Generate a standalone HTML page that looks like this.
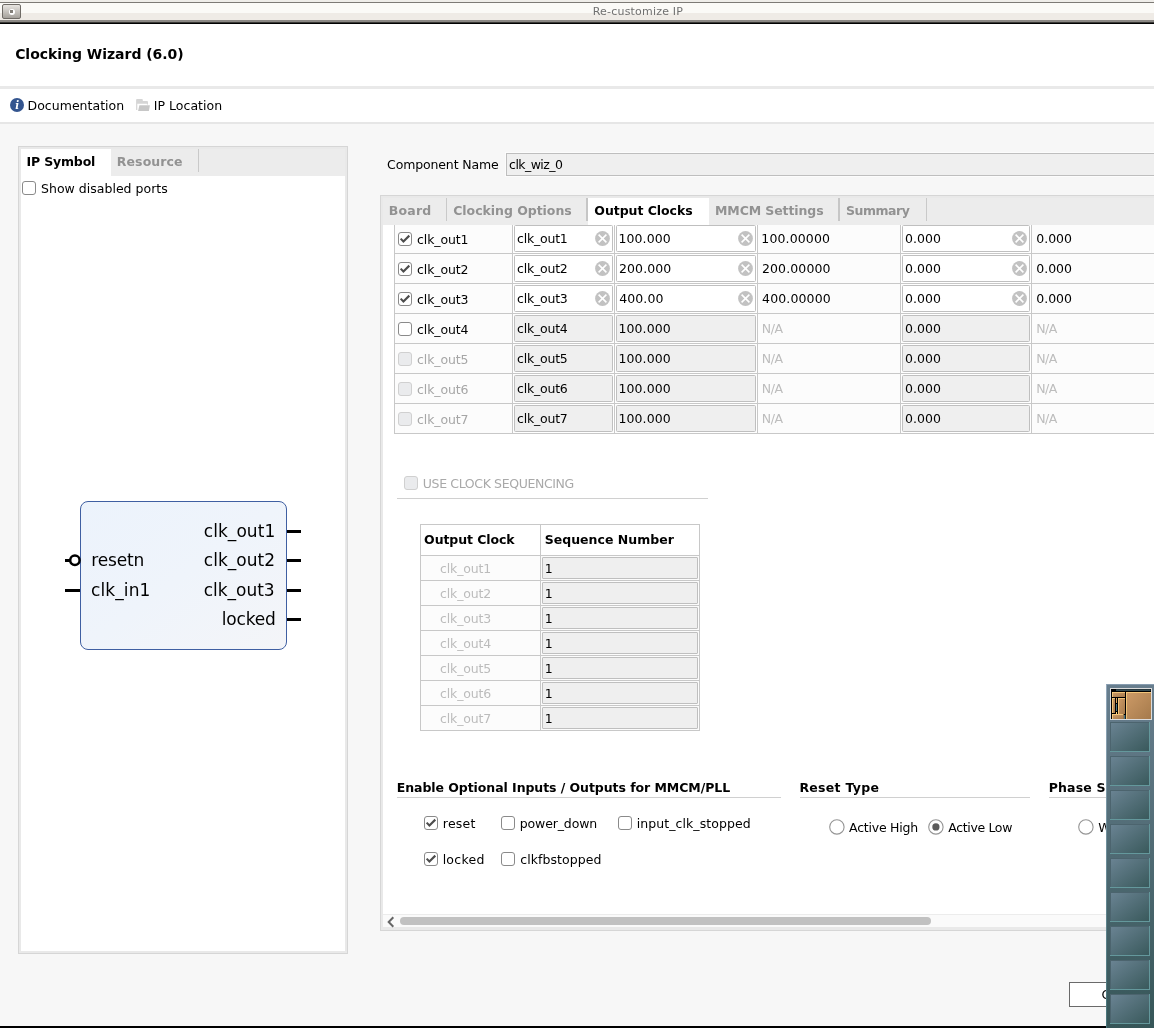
<!DOCTYPE html>
<html><head><meta charset="utf-8"><title>Re-customize IP</title>
<style>
*{box-sizing:border-box;margin:0;padding:0}
html,body{width:1154px;height:1028px;overflow:hidden;background:#f7f7f7}
body{position:relative;font-family:"DejaVu Sans","Liberation Sans",sans-serif;font-size:12.5px;color:#000;line-height:16px}
.a{position:absolute}
.t{position:absolute;white-space:pre;line-height:16px;height:16px}

.cb{position:absolute;width:14px;height:14px;border:1px solid #8a8a8a;border-radius:3px;background:#fff}
.cb.d{border-color:#d0d0d0;background:#eaebed}
.cb svg{position:absolute;left:-1px;top:-1px}
.inp{position:absolute;border:1px solid #bfbfbf;border-radius:1.5px;background:#fff}
.inp.d{background:#efefef}

</style></head><body>
<div class="a" style="left:0px;top:0px;width:1154px;height:24px;background:#000;"></div>
<div class="a" style="left:0px;top:0px;width:1154px;height:2px;background:#efede9;"></div>
<div class="a" style="left:0px;top:2px;width:1154px;height:1px;background:#7d7a75;"></div>
<div class="a" style="left:0px;top:3px;width:1154px;height:17px;background:linear-gradient(#fbfaf7 0,#fbfaf7 59%,#efebe6 59%,#efebe6 100%);"></div>
<div class="a" style="left:0px;top:20px;width:1154px;height:2px;background:#8b8884;"></div>
<div class="a" style="left:0px;top:22px;width:1154px;height:1px;background:#3a3936;"></div>
<div class="a" style="left:2px;top:4px;width:19px;height:15px;background:linear-gradient(#e8e5e1,#a5a19b);border:1px solid #6f6b66;border-radius:2px"></div>
<div class="a" style="left:8.5px;top:8.7px;width:6.2px;height:6.2px;background:#fff;border-radius:50%"></div>
<div class="a" style="left:10.3px;top:9.8px;width:2.6px;height:3.1px;background:#827e78;"></div>
<div class="a" style="left:0px;top:24px;width:1154px;height:62px;background:#fff;"></div>
<div class="a" style="left:0px;top:86px;width:1154px;height:3px;background:#e9e9e9;"></div>
<div class="a" style="left:0px;top:89px;width:1154px;height:33px;background:#fff;"></div>
<div class="a" style="left:0px;top:122px;width:1154px;height:2px;background:#e6e6e6;"></div>
<svg class="a" style="left:10px;top:98px;will-change:transform" width="14" height="14" viewBox="0 0 14 14"><circle cx="7" cy="7" r="7" fill="#34558f"/><text x="7.3" y="11" font-family="DejaVu Serif" font-style="italic" font-weight="bold" font-size="10.3" fill="#fff" text-anchor="middle">i</text></svg>
<svg class="a" style="left:136px;top:98px" width="15" height="14" viewBox="0 0 15 14"><path d="M0.1 2 Q0.1 1.1 1 1.1 L6 1.1 Q6.8 1.1 6.8 2 L6.8 3.1 L11 3.1 Q12 3.1 12 4 L12 6.6 L10.9 6.6 L10.9 5.8 L1.3 5.8 L1.3 11.9 L0.1 11.9 Z" fill="#d5d5d5"/><path d="M3.4 7.2 L13.9 7.2 L12.9 12.9 L2.1 12.9 Z" fill="#c7c7c7"/></svg>
<div class="a" style="left:18px;top:146px;width:330px;height:808px;background:#d6d6d6;"></div>
<div class="a" style="left:19px;top:147px;width:328px;height:806px;background:#e9e9e9;"></div>
<div class="a" style="left:21px;top:149px;width:324px;height:802px;background:#fff;"></div>
<div class="a" style="left:21px;top:149px;width:324px;height:27px;background:#ececec;"></div>
<div class="a" style="left:21px;top:149px;width:90px;height:27px;background:#fff;"></div>
<div class="a" style="left:198px;top:149px;width:1px;height:23px;background:#c9c9c9;"></div>
<div class="cb" style="left:22px;top:181px"></div>
<svg class="a" style="left:60px;top:495px" width="250" height="165" viewBox="60 495 250 165"><defs><linearGradient id="sg" x1="0" y1="0" x2="1" y2="1"><stop offset="0" stop-color="#ecf3fc"/><stop offset="0.5" stop-color="#eff4fb"/><stop offset="1" stop-color="#f4f5f8"/></linearGradient></defs><rect x="80.5" y="501.5" width="206" height="148" rx="7.5" ry="7.5" fill="url(#sg)" stroke="#3f5fa2" stroke-width="1"/><line x1="287" y1="531.5" x2="301" y2="531.5" stroke="#000" stroke-width="3"/><line x1="287" y1="560.5" x2="301" y2="560.5" stroke="#000" stroke-width="3"/><line x1="287" y1="590.5" x2="301" y2="590.5" stroke="#000" stroke-width="3"/><line x1="287" y1="619.5" x2="301" y2="619.5" stroke="#000" stroke-width="3"/><line x1="65" y1="590.5" x2="80" y2="590.5" stroke="#000" stroke-width="3"/><line x1="65" y1="560.5" x2="70" y2="560.5" stroke="#000" stroke-width="3"/><circle cx="74.9" cy="560.2" r="4.7" fill="#fff" stroke="#000" stroke-width="2.5"/></svg>
<div class="inp d" style="left:506px;top:153px;width:660px;height:23px;border-radius:0;border-color:#bebebe;box-shadow:0 0 0 1px #fcfcfc"></div>
<div class="a" style="left:380px;top:195px;width:790px;height:736px;background:#d6d6d6;"></div>
<div class="a" style="left:381px;top:196px;width:790px;height:734px;background:#e9e9e9;"></div>
<div class="a" style="left:383px;top:198px;width:790px;height:729px;background:#fff;"></div>
<div class="a" style="left:383px;top:198px;width:790px;height:27px;background:#ececec;"></div>
<div class="a" style="left:588px;top:198px;width:121px;height:27px;background:#fff;"></div>
<div class="a" style="left:586px;top:198px;width:2px;height:23px;background:#c6c6c6;"></div>
<div class="a" style="left:446px;top:198px;width:1px;height:23px;background:#c9c9c9;"></div>
<div class="a" style="left:838px;top:198px;width:2px;height:23px;background:#c6c6c6;"></div>
<div class="a" style="left:926px;top:198px;width:1px;height:23px;background:#c9c9c9;"></div>
<div class="a" style="left:394px;top:225px;width:770px;height:209px;background:#fcfcfc;"></div>
<div class="a" style="left:513px;top:225px;width:101px;height:209px;background:#fff;"></div>
<div class="a" style="left:615px;top:225px;width:142px;height:209px;background:#fff;"></div>
<div class="a" style="left:901px;top:225px;width:130px;height:209px;background:#fff;"></div>
<div class="a" style="left:394px;top:225px;width:1px;height:209px;background:#c8c8c8;"></div>
<div class="a" style="left:394px;top:253px;width:770px;height:1px;background:#c8c8c8;"></div>
<div class="a" style="left:394px;top:283px;width:770px;height:1px;background:#c8c8c8;"></div>
<div class="a" style="left:394px;top:313px;width:770px;height:1px;background:#c8c8c8;"></div>
<div class="a" style="left:394px;top:343px;width:770px;height:1px;background:#c8c8c8;"></div>
<div class="a" style="left:394px;top:373px;width:770px;height:1px;background:#c8c8c8;"></div>
<div class="a" style="left:394px;top:403px;width:770px;height:1px;background:#c8c8c8;"></div>
<div class="a" style="left:394px;top:433px;width:770px;height:1px;background:#c8c8c8;"></div>
<div class="a" style="left:512px;top:225px;width:1px;height:209px;background:#c8c8c8;"></div>
<div class="a" style="left:614px;top:225px;width:1px;height:209px;background:#c8c8c8;"></div>
<div class="a" style="left:757px;top:225px;width:1px;height:209px;background:#c8c8c8;"></div>
<div class="a" style="left:900px;top:225px;width:1px;height:209px;background:#c8c8c8;"></div>
<div class="a" style="left:1031px;top:225px;width:1px;height:209px;background:#c8c8c8;"></div>
<div class="cb" style="left:398px;top:232px"><svg width="14" height="14" viewBox="0 0 14 14"><path d="M1.9 7.35 L3.4 5.95 L5.4 8 L10.6 2.85 L12.05 4.5 L5.4 11 Z" fill="#4d4d4d"/></svg></div>
<div class="inp" style="left:514px;top:225px;width:99px;height:27px"></div>
<div class="inp" style="left:616px;top:225px;width:140px;height:27px"></div>
<div class="inp" style="left:902px;top:225px;width:128px;height:27px"></div>
<svg class="a" style="left:595px;top:231px" width="15" height="15" viewBox="0 0 15 15"><circle cx="7.5" cy="7.5" r="7.4" fill="#c2c2c2"/><path d="M3.6 3.6 L11.4 11.4 M11.4 3.6 L3.6 11.4" stroke="#fff" stroke-width="1.6" fill="none"/></svg>
<svg class="a" style="left:738px;top:231px" width="15" height="15" viewBox="0 0 15 15"><circle cx="7.5" cy="7.5" r="7.4" fill="#c2c2c2"/><path d="M3.6 3.6 L11.4 11.4 M11.4 3.6 L3.6 11.4" stroke="#fff" stroke-width="1.6" fill="none"/></svg>
<svg class="a" style="left:1012px;top:231px" width="15" height="15" viewBox="0 0 15 15"><circle cx="7.5" cy="7.5" r="7.4" fill="#c2c2c2"/><path d="M3.6 3.6 L11.4 11.4 M11.4 3.6 L3.6 11.4" stroke="#fff" stroke-width="1.6" fill="none"/></svg>
<div class="cb" style="left:398px;top:262px"><svg width="14" height="14" viewBox="0 0 14 14"><path d="M1.9 7.35 L3.4 5.95 L5.4 8 L10.6 2.85 L12.05 4.5 L5.4 11 Z" fill="#4d4d4d"/></svg></div>
<div class="inp" style="left:514px;top:255px;width:99px;height:27px"></div>
<div class="inp" style="left:616px;top:255px;width:140px;height:27px"></div>
<div class="inp" style="left:902px;top:255px;width:128px;height:27px"></div>
<svg class="a" style="left:595px;top:261px" width="15" height="15" viewBox="0 0 15 15"><circle cx="7.5" cy="7.5" r="7.4" fill="#c2c2c2"/><path d="M3.6 3.6 L11.4 11.4 M11.4 3.6 L3.6 11.4" stroke="#fff" stroke-width="1.6" fill="none"/></svg>
<svg class="a" style="left:738px;top:261px" width="15" height="15" viewBox="0 0 15 15"><circle cx="7.5" cy="7.5" r="7.4" fill="#c2c2c2"/><path d="M3.6 3.6 L11.4 11.4 M11.4 3.6 L3.6 11.4" stroke="#fff" stroke-width="1.6" fill="none"/></svg>
<svg class="a" style="left:1012px;top:261px" width="15" height="15" viewBox="0 0 15 15"><circle cx="7.5" cy="7.5" r="7.4" fill="#c2c2c2"/><path d="M3.6 3.6 L11.4 11.4 M11.4 3.6 L3.6 11.4" stroke="#fff" stroke-width="1.6" fill="none"/></svg>
<div class="cb" style="left:398px;top:292px"><svg width="14" height="14" viewBox="0 0 14 14"><path d="M1.9 7.35 L3.4 5.95 L5.4 8 L10.6 2.85 L12.05 4.5 L5.4 11 Z" fill="#4d4d4d"/></svg></div>
<div class="inp" style="left:514px;top:285px;width:99px;height:27px"></div>
<div class="inp" style="left:616px;top:285px;width:140px;height:27px"></div>
<div class="inp" style="left:902px;top:285px;width:128px;height:27px"></div>
<svg class="a" style="left:595px;top:291px" width="15" height="15" viewBox="0 0 15 15"><circle cx="7.5" cy="7.5" r="7.4" fill="#c2c2c2"/><path d="M3.6 3.6 L11.4 11.4 M11.4 3.6 L3.6 11.4" stroke="#fff" stroke-width="1.6" fill="none"/></svg>
<svg class="a" style="left:738px;top:291px" width="15" height="15" viewBox="0 0 15 15"><circle cx="7.5" cy="7.5" r="7.4" fill="#c2c2c2"/><path d="M3.6 3.6 L11.4 11.4 M11.4 3.6 L3.6 11.4" stroke="#fff" stroke-width="1.6" fill="none"/></svg>
<svg class="a" style="left:1012px;top:291px" width="15" height="15" viewBox="0 0 15 15"><circle cx="7.5" cy="7.5" r="7.4" fill="#c2c2c2"/><path d="M3.6 3.6 L11.4 11.4 M11.4 3.6 L3.6 11.4" stroke="#fff" stroke-width="1.6" fill="none"/></svg>
<div class="cb" style="left:398px;top:322px"></div>
<div class="inp d" style="left:514px;top:315px;width:99px;height:27px"></div>
<div class="inp d" style="left:616px;top:315px;width:140px;height:27px"></div>
<div class="inp d" style="left:902px;top:315px;width:128px;height:27px"></div>
<div class="cb d" style="left:398px;top:352px"></div>
<div class="inp d" style="left:514px;top:345px;width:99px;height:27px"></div>
<div class="inp d" style="left:616px;top:345px;width:140px;height:27px"></div>
<div class="inp d" style="left:902px;top:345px;width:128px;height:27px"></div>
<div class="cb d" style="left:398px;top:382px"></div>
<div class="inp d" style="left:514px;top:375px;width:99px;height:27px"></div>
<div class="inp d" style="left:616px;top:375px;width:140px;height:27px"></div>
<div class="inp d" style="left:902px;top:375px;width:128px;height:27px"></div>
<div class="cb d" style="left:398px;top:412px"></div>
<div class="inp d" style="left:514px;top:405px;width:99px;height:27px"></div>
<div class="inp d" style="left:616px;top:405px;width:140px;height:27px"></div>
<div class="inp d" style="left:902px;top:405px;width:128px;height:27px"></div>
<div class="cb d" style="left:404px;top:476px"></div>
<div class="a" style="left:397px;top:498px;width:311px;height:1px;background:#d0d0d0;"></div>
<div class="a" style="left:420px;top:524px;width:280px;height:207px;background:#c8c8c8;"></div>
<div class="a" style="left:421px;top:525px;width:119px;height:30px;background:#fff;"></div>
<div class="a" style="left:541px;top:525px;width:158px;height:30px;background:#fff;"></div>
<div class="a" style="left:421px;top:556px;width:119px;height:24px;background:#fcfcfc;"></div>
<div class="a" style="left:541px;top:556px;width:158px;height:24px;background:#fcfcfc;"></div>
<div class="inp d" style="left:542px;top:557px;width:156px;height:22px;border-radius:1px"></div>
<div class="a" style="left:421px;top:581px;width:119px;height:24px;background:#fcfcfc;"></div>
<div class="a" style="left:541px;top:581px;width:158px;height:24px;background:#fcfcfc;"></div>
<div class="inp d" style="left:542px;top:582px;width:156px;height:22px;border-radius:1px"></div>
<div class="a" style="left:421px;top:606px;width:119px;height:24px;background:#fcfcfc;"></div>
<div class="a" style="left:541px;top:606px;width:158px;height:24px;background:#fcfcfc;"></div>
<div class="inp d" style="left:542px;top:607px;width:156px;height:22px;border-radius:1px"></div>
<div class="a" style="left:421px;top:631px;width:119px;height:24px;background:#fcfcfc;"></div>
<div class="a" style="left:541px;top:631px;width:158px;height:24px;background:#fcfcfc;"></div>
<div class="inp d" style="left:542px;top:632px;width:156px;height:22px;border-radius:1px"></div>
<div class="a" style="left:421px;top:656px;width:119px;height:24px;background:#fcfcfc;"></div>
<div class="a" style="left:541px;top:656px;width:158px;height:24px;background:#fcfcfc;"></div>
<div class="inp d" style="left:542px;top:657px;width:156px;height:22px;border-radius:1px"></div>
<div class="a" style="left:421px;top:681px;width:119px;height:24px;background:#fcfcfc;"></div>
<div class="a" style="left:541px;top:681px;width:158px;height:24px;background:#fcfcfc;"></div>
<div class="inp d" style="left:542px;top:682px;width:156px;height:22px;border-radius:1px"></div>
<div class="a" style="left:421px;top:706px;width:119px;height:24px;background:#fcfcfc;"></div>
<div class="a" style="left:541px;top:706px;width:158px;height:24px;background:#fcfcfc;"></div>
<div class="inp d" style="left:542px;top:707px;width:156px;height:22px;border-radius:1px"></div>
<div class="a" style="left:397px;top:797px;width:384px;height:1px;background:#d0d0d0;"></div>
<div class="a" style="left:800px;top:797px;width:230px;height:1px;background:#d0d0d0;"></div>
<div class="a" style="left:1049px;top:797px;width:120px;height:1px;background:#d0d0d0;"></div>
<div class="cb" style="left:424px;top:816px"><svg width="14" height="14" viewBox="0 0 14 14"><path d="M1.9 7.35 L3.4 5.95 L5.4 8 L10.6 2.85 L12.05 4.5 L5.4 11 Z" fill="#4d4d4d"/></svg></div>
<div class="cb" style="left:501px;top:816px"></div>
<div class="cb" style="left:618px;top:816px"></div>
<div class="cb" style="left:424px;top:852px"><svg width="14" height="14" viewBox="0 0 14 14"><path d="M1.9 7.35 L3.4 5.95 L5.4 8 L10.6 2.85 L12.05 4.5 L5.4 11 Z" fill="#4d4d4d"/></svg></div>
<div class="cb" style="left:501px;top:852px"></div>
<svg class="a" style="left:828px;top:818px" width="18" height="18" viewBox="0 0 18 18"><circle cx="8.9" cy="8.9" r="7.2" fill="#fff" stroke="#959595" stroke-width="1.1"/></svg>
<svg class="a" style="left:927px;top:818px" width="18" height="18" viewBox="0 0 18 18"><circle cx="8.9" cy="8.9" r="7.2" fill="#fff" stroke="#959595" stroke-width="1.1"/><circle cx="8.9" cy="8.9" r="3.6" fill="#5c5c5c"/></svg>
<svg class="a" style="left:1077px;top:818px" width="18" height="18" viewBox="0 0 18 18"><circle cx="8.9" cy="8.9" r="7.2" fill="#fff" stroke="#959595" stroke-width="1.1"/></svg>
<div class="a" style="left:383px;top:914px;width:790px;height:13px;background:#fafafa;"></div>
<div class="a" style="left:383px;top:914px;width:790px;height:1px;background:#ececec;"></div>
<svg class="a" style="left:386px;top:915px" width="10" height="13" viewBox="0 0 10 13"><path d="M7.3 2.3 L2.7 7 L7.3 11.7" fill="none" stroke="#666" stroke-width="2"/></svg>
<div class="a" style="left:400px;top:917px;width:531px;height:8px;background:#c1c1c1;border-radius:4px"></div>
<div class="a" style="left:1069px;top:982px;width:90px;height:25px;background:#fff;border:1px solid #6a6a6a"></div>
<div class="a" style="left:0px;top:1026px;width:1154px;height:2px;background:#000;"></div>
<div class="a" style="left:0;top:0;width:1154px;height:1028px;will-change:transform">
<div class="t" style="left:592.77px;top:4px;font-size:11px;line-height:16px;height:16px;color:#707070;letter-spacing:0.196px">Re-customize IP</div>
<div class="t" style="left:15.14px;top:45px;font-size:14px;line-height:19px;height:19px;font-weight:bold;letter-spacing:-0.030px">Clocking Wizard (6.0)</div>
<div class="t" style="left:27.53px;top:98px;letter-spacing:0.025px">Documentation</div>
<div class="t" style="left:153.73px;top:98px;letter-spacing:0.040px">IP Location</div>
<div class="t" style="left:26.52px;top:154px;font-weight:bold;letter-spacing:-0.165px">IP Symbol</div>
<div class="t" style="left:116.82px;top:154px;font-weight:bold;color:#929292;letter-spacing:0.095px">Resource</div>
<div class="t" style="left:41.02px;top:181px;letter-spacing:0.018px">Show disabled ports</div>
<div class="t" style="left:203.80px;top:520px;font-size:17px;line-height:23px;height:23px;letter-spacing:0.049px">clk_out1</div>
<div class="t" style="left:203.80px;top:549px;font-size:17px;line-height:23px;height:23px;letter-spacing:0.021px">clk_out2</div>
<div class="t" style="left:203.80px;top:579px;font-size:17px;line-height:23px;height:23px;letter-spacing:-0.032px">clk_out3</div>
<div class="t" style="left:221.81px;top:608px;font-size:17px;line-height:23px;height:23px;letter-spacing:-0.174px">locked</div>
<div class="t" style="left:91.17px;top:549px;font-size:17px;line-height:23px;height:23px;letter-spacing:-0.138px">resetn</div>
<div class="t" style="left:91.00px;top:579px;font-size:17px;line-height:23px;height:23px;letter-spacing:0.115px">clk_in1</div>
<div class="t" style="left:387.11px;top:157px;letter-spacing:-0.144px">Component Name</div>
<div class="t" style="left:509.11px;top:157px;letter-spacing:-0.560px">clk_wiz_0</div>
<div class="t" style="left:388.72px;top:203px;font-weight:bold;color:#929292;letter-spacing:0.213px">Board</div>
<div class="t" style="left:453.21px;top:203px;font-weight:bold;color:#929292;letter-spacing:-0.035px">Clocking Options</div>
<div class="t" style="left:594.31px;top:203px;font-weight:bold;letter-spacing:-0.041px">Output Clocks</div>
<div class="t" style="left:715.02px;top:203px;font-weight:bold;color:#929292;letter-spacing:-0.105px">MMCM Settings</div>
<div class="t" style="left:846.12px;top:203px;font-weight:bold;color:#929292;letter-spacing:-0.496px">Summary</div>
<div class="t" style="left:417.11px;top:232px;letter-spacing:-0.122px">clk_out1</div>
<div class="t" style="left:517.11px;top:231px;letter-spacing:-0.222px">clk_out1</div>
<div class="t" style="left:618.43px;top:231px;letter-spacing:0.100px">100.000</div>
<div class="t" style="left:905.12px;top:231px;letter-spacing:0.006px">0.000</div>
<div class="t" style="left:761.33px;top:231px;letter-spacing:0.125px">100.00000</div>
<div class="t" style="left:1036.22px;top:231px;letter-spacing:0.006px">0.000</div>
<div class="t" style="left:417.11px;top:262px;letter-spacing:-0.122px">clk_out2</div>
<div class="t" style="left:517.11px;top:261px;letter-spacing:-0.222px">clk_out2</div>
<div class="t" style="left:619.02px;top:261px;letter-spacing:0.100px">200.000</div>
<div class="t" style="left:905.12px;top:261px;letter-spacing:0.006px">0.000</div>
<div class="t" style="left:761.92px;top:261px;letter-spacing:0.125px">200.00000</div>
<div class="t" style="left:1036.22px;top:261px;letter-spacing:0.006px">0.000</div>
<div class="t" style="left:417.11px;top:292px;letter-spacing:-0.122px">clk_out3</div>
<div class="t" style="left:517.11px;top:291px;letter-spacing:-0.222px">clk_out3</div>
<div class="t" style="left:619.21px;top:291px;letter-spacing:0.100px">400.00</div>
<div class="t" style="left:905.12px;top:291px;letter-spacing:0.006px">0.000</div>
<div class="t" style="left:762.11px;top:291px;letter-spacing:0.125px">400.00000</div>
<div class="t" style="left:1036.22px;top:291px;letter-spacing:0.006px">0.000</div>
<div class="t" style="left:417.11px;top:322px;letter-spacing:-0.122px">clk_out4</div>
<div class="t" style="left:517.11px;top:321px;letter-spacing:-0.222px">clk_out4</div>
<div class="t" style="left:618.43px;top:321px;letter-spacing:0.100px">100.000</div>
<div class="t" style="left:905.12px;top:321px;letter-spacing:0.006px">0.000</div>
<div class="t" style="left:761.73px;top:321px;color:#bdbdbd;letter-spacing:-0.442px">N/A</div>
<div class="t" style="left:1036.13px;top:321px;color:#bdbdbd;letter-spacing:-0.442px">N/A</div>
<div class="t" style="left:417.11px;top:352px;color:#a6a6a6;letter-spacing:-0.122px">clk_out5</div>
<div class="t" style="left:517.11px;top:351px;letter-spacing:-0.222px">clk_out5</div>
<div class="t" style="left:618.43px;top:351px;letter-spacing:0.100px">100.000</div>
<div class="t" style="left:905.12px;top:351px;letter-spacing:0.006px">0.000</div>
<div class="t" style="left:761.73px;top:351px;color:#bdbdbd;letter-spacing:-0.442px">N/A</div>
<div class="t" style="left:1036.13px;top:351px;color:#bdbdbd;letter-spacing:-0.442px">N/A</div>
<div class="t" style="left:417.11px;top:382px;color:#a6a6a6;letter-spacing:-0.122px">clk_out6</div>
<div class="t" style="left:517.11px;top:381px;letter-spacing:-0.222px">clk_out6</div>
<div class="t" style="left:618.43px;top:381px;letter-spacing:0.100px">100.000</div>
<div class="t" style="left:905.12px;top:381px;letter-spacing:0.006px">0.000</div>
<div class="t" style="left:761.73px;top:381px;color:#bdbdbd;letter-spacing:-0.442px">N/A</div>
<div class="t" style="left:1036.13px;top:381px;color:#bdbdbd;letter-spacing:-0.442px">N/A</div>
<div class="t" style="left:417.11px;top:412px;color:#a6a6a6;letter-spacing:-0.122px">clk_out7</div>
<div class="t" style="left:517.11px;top:411px;letter-spacing:-0.222px">clk_out7</div>
<div class="t" style="left:618.43px;top:411px;letter-spacing:0.100px">100.000</div>
<div class="t" style="left:905.12px;top:411px;letter-spacing:0.006px">0.000</div>
<div class="t" style="left:761.73px;top:411px;color:#bdbdbd;letter-spacing:-0.442px">N/A</div>
<div class="t" style="left:1036.13px;top:411px;color:#bdbdbd;letter-spacing:-0.442px">N/A</div>
<div class="t" style="left:422.82px;top:476px;color:#a9a9a9;letter-spacing:-0.368px">USE CLOCK SEQUENCING</div>
<div class="t" style="left:424.11px;top:532px;font-weight:bold;letter-spacing:-0.094px">Output Clock</div>
<div class="t" style="left:544.72px;top:532px;font-weight:bold;letter-spacing:0.013px">Sequence Number</div>
<div class="t" style="left:440.11px;top:561px;color:#bcbcbc;letter-spacing:-0.165px">clk_out1</div>
<div class="t" style="left:544.63px;top:561px">1</div>
<div class="t" style="left:440.11px;top:586px;color:#bcbcbc;letter-spacing:-0.165px">clk_out2</div>
<div class="t" style="left:544.63px;top:586px">1</div>
<div class="t" style="left:440.11px;top:611px;color:#bcbcbc;letter-spacing:-0.165px">clk_out3</div>
<div class="t" style="left:544.63px;top:611px">1</div>
<div class="t" style="left:440.11px;top:636px;color:#bcbcbc;letter-spacing:-0.165px">clk_out4</div>
<div class="t" style="left:544.63px;top:636px">1</div>
<div class="t" style="left:440.11px;top:661px;color:#bcbcbc;letter-spacing:-0.165px">clk_out5</div>
<div class="t" style="left:544.63px;top:661px">1</div>
<div class="t" style="left:440.11px;top:686px;color:#bcbcbc;letter-spacing:-0.165px">clk_out6</div>
<div class="t" style="left:544.63px;top:686px">1</div>
<div class="t" style="left:440.11px;top:711px;color:#bcbcbc;letter-spacing:-0.165px">clk_out7</div>
<div class="t" style="left:544.63px;top:711px">1</div>
<div class="t" style="left:396.72px;top:780px;font-weight:bold;letter-spacing:-0.063px">Enable Optional Inputs / Outputs for MMCM/PLL</div>
<div class="t" style="left:799.42px;top:780px;font-weight:bold;letter-spacing:0.276px">Reset Type</div>
<div class="t" style="left:1048.72px;top:780px;font-weight:bold;letter-spacing:0.150px">Phase Shift Mode</div>
<div class="t" style="left:442.82px;top:816px;letter-spacing:0.233px">reset</div>
<div class="t" style="left:519.82px;top:816px;letter-spacing:-0.138px">power_down</div>
<div class="t" style="left:636.83px;top:816px;letter-spacing:0.061px">input_clk_stopped</div>
<div class="t" style="left:442.63px;top:852px;letter-spacing:0.272px">locked</div>
<div class="t" style="left:520.21px;top:852px;letter-spacing:0.065px">clkfbstopped</div>
<div class="t" style="left:849.10px;top:820px;letter-spacing:-0.238px">Active High</div>
<div class="t" style="left:948.30px;top:820px;letter-spacing:-0.355px">Active Low</div>
<div class="t" style="left:1098.21px;top:820px">WAVEFORM</div>
<div class="t" style="left:1101.41px;top:987px">Cancel</div>
</div>
<svg class="a" style="left:1106px;top:684px" width="48" height="344" viewBox="1106 684 48 344"><defs><linearGradient id="pf" x1="0" y1="0" x2="0" y2="1"><stop offset="0" stop-color="#687e8e"/><stop offset="1" stop-color="#365658"/></linearGradient><linearGradient id="pc" x1="0" y1="0" x2="1" y2="1"><stop offset="0" stop-color="#6b8494"/><stop offset="1" stop-color="#38585a"/></linearGradient><linearGradient id="po" x1="0" y1="0" x2="1" y2="1"><stop offset="0" stop-color="#cc9a66"/><stop offset="1" stop-color="#a57a4c"/></linearGradient></defs><rect x="1106" y="684" width="48" height="344" fill="url(#pf)"/><linearGradient id="pe" x1="0" y1="0" x2="0" y2="1"><stop offset="0" stop-color="#93a8bb"/><stop offset="1" stop-color="#477479"/></linearGradient><rect x="1106" y="684" width="1" height="344" fill="url(#pe)"/><rect x="1106" y="684" width="48" height="1" fill="#8ea4b8" opacity="0.8"/><rect x="1110" y="722" width="40" height="30" fill="url(#pc)"/><rect x="1110" y="722" width="40" height="1" fill="#4c646e"/><rect x="1110" y="722" width="1" height="30" fill="#4c646e"/><rect x="1110" y="751" width="40" height="1" fill="#64989c"/><rect x="1149" y="722" width="1" height="30" fill="#64989c"/><rect x="1110" y="756" width="40" height="30" fill="url(#pc)"/><rect x="1110" y="756" width="40" height="1" fill="#4c646e"/><rect x="1110" y="756" width="1" height="30" fill="#4c646e"/><rect x="1110" y="785" width="40" height="1" fill="#64989c"/><rect x="1149" y="756" width="1" height="30" fill="#64989c"/><rect x="1110" y="790" width="40" height="30" fill="url(#pc)"/><rect x="1110" y="790" width="40" height="1" fill="#4c646e"/><rect x="1110" y="790" width="1" height="30" fill="#4c646e"/><rect x="1110" y="819" width="40" height="1" fill="#64989c"/><rect x="1149" y="790" width="1" height="30" fill="#64989c"/><rect x="1110" y="824" width="40" height="30" fill="url(#pc)"/><rect x="1110" y="824" width="40" height="1" fill="#4c646e"/><rect x="1110" y="824" width="1" height="30" fill="#4c646e"/><rect x="1110" y="853" width="40" height="1" fill="#64989c"/><rect x="1149" y="824" width="1" height="30" fill="#64989c"/><rect x="1110" y="858" width="40" height="30" fill="url(#pc)"/><rect x="1110" y="858" width="40" height="1" fill="#4c646e"/><rect x="1110" y="858" width="1" height="30" fill="#4c646e"/><rect x="1110" y="887" width="40" height="1" fill="#64989c"/><rect x="1149" y="858" width="1" height="30" fill="#64989c"/><rect x="1110" y="892" width="40" height="30" fill="url(#pc)"/><rect x="1110" y="892" width="40" height="1" fill="#4c646e"/><rect x="1110" y="892" width="1" height="30" fill="#4c646e"/><rect x="1110" y="921" width="40" height="1" fill="#64989c"/><rect x="1149" y="892" width="1" height="30" fill="#64989c"/><rect x="1110" y="926" width="40" height="30" fill="url(#pc)"/><rect x="1110" y="926" width="40" height="1" fill="#4c646e"/><rect x="1110" y="926" width="1" height="30" fill="#4c646e"/><rect x="1110" y="955" width="40" height="1" fill="#64989c"/><rect x="1149" y="926" width="1" height="30" fill="#64989c"/><rect x="1110" y="960" width="40" height="30" fill="url(#pc)"/><rect x="1110" y="960" width="40" height="1" fill="#4c646e"/><rect x="1110" y="960" width="1" height="30" fill="#4c646e"/><rect x="1110" y="989" width="40" height="1" fill="#64989c"/><rect x="1149" y="960" width="1" height="30" fill="#64989c"/><rect x="1110" y="994" width="40" height="30" fill="url(#pc)"/><rect x="1110" y="994" width="40" height="1" fill="#4c646e"/><rect x="1110" y="994" width="1" height="30" fill="#4c646e"/><rect x="1110" y="1023" width="40" height="1" fill="#64989c"/><rect x="1149" y="994" width="1" height="30" fill="#64989c"/><rect x="1110" y="688" width="42" height="32" fill="#dcdcdc"/><rect x="1111" y="689" width="40" height="30" fill="#000"/><rect x="1116" y="689.5" width="34.5" height="1.2" fill="#4e6e78"/><rect x="1126" y="692" width="25" height="27" fill="#ffd27f"/><rect x="1126.8" y="692.8" width="24.2" height="26.2" fill="url(#po)"/><rect x="1112" y="692" width="13" height="5" fill="#ffd27f"/><rect x="1112.8" y="692.8" width="12.2" height="4.2" fill="url(#po)"/><rect x="1112" y="698" width="3" height="15" fill="#ffd27f"/><rect x="1112.8" y="698.8" width="2.2" height="14.2" fill="url(#po)"/><rect x="1118" y="698" width="7" height="16" fill="#ffd27f"/><rect x="1118.8" y="698.8" width="6.2" height="15.2" fill="url(#po)"/><rect x="1112" y="714" width="11.5" height="5" fill="#ffd27f"/><rect x="1112.8" y="714.8" width="10.7" height="4.2" fill="url(#po)"/><rect x="1116" y="698" width="1" height="5" fill="#e0a860"/><rect x="1116" y="704" width="1" height="7" fill="#4e7884"/><rect x="1116" y="712" width="1" height="2" fill="#ffd27f"/><rect x="1124" y="715" width="1.3" height="4" fill="#4e7884"/></svg>
</body></html>
